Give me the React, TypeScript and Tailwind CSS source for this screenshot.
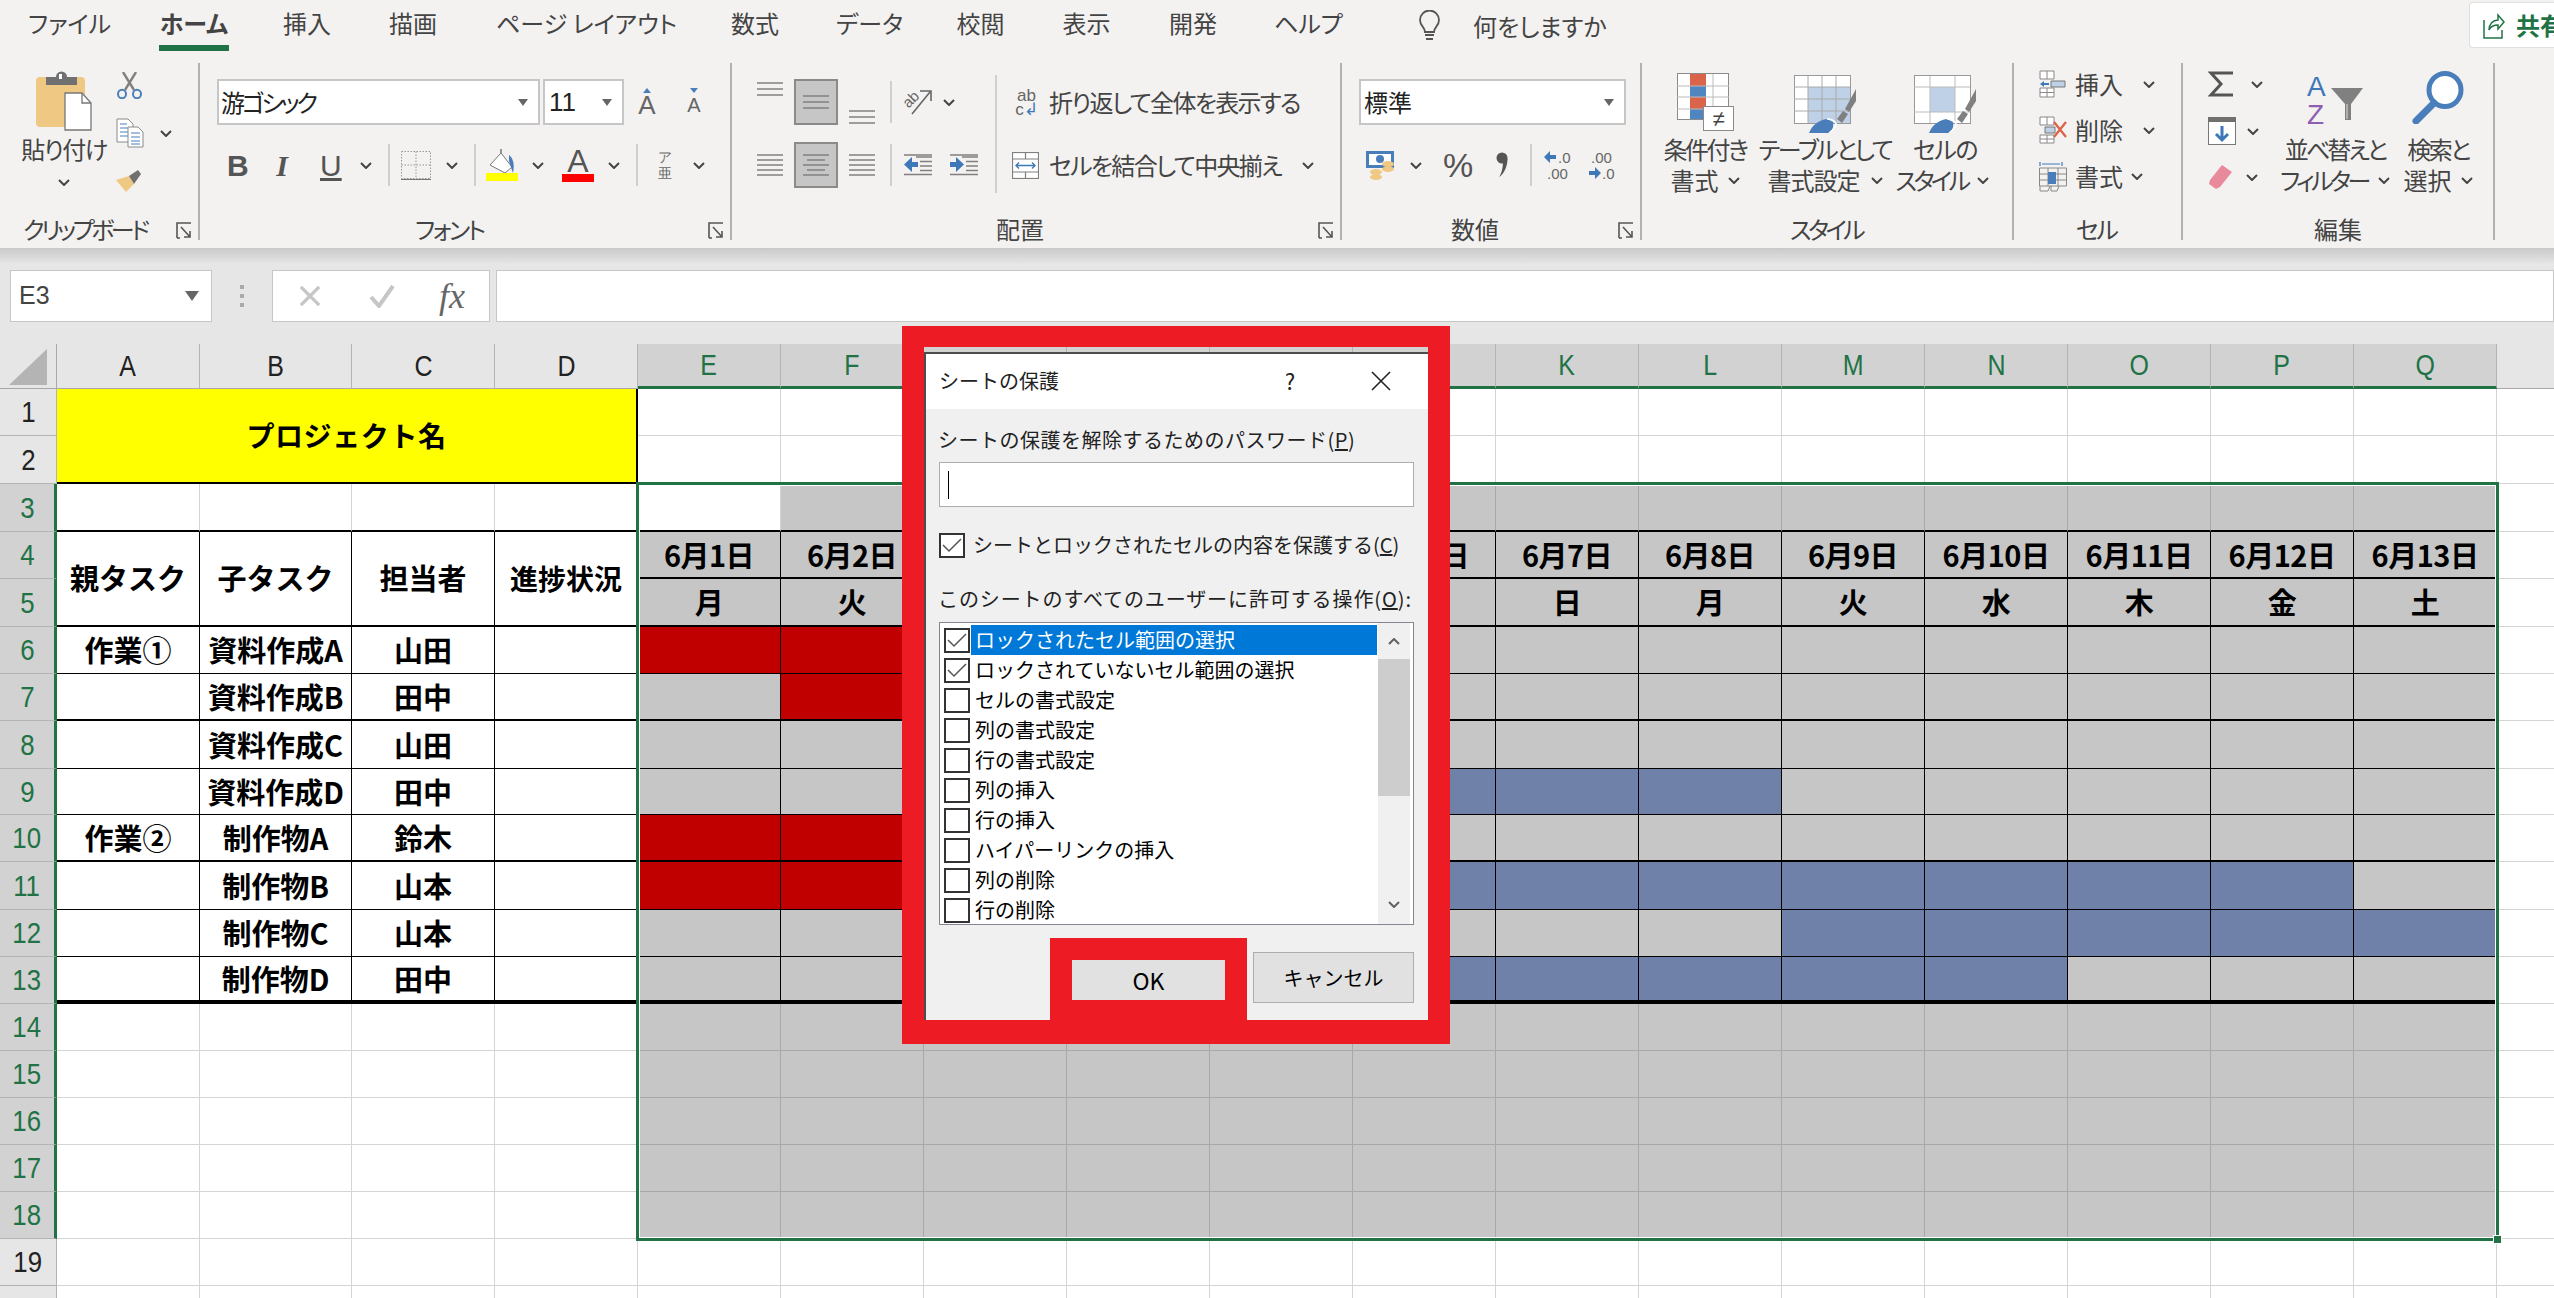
import React from 'react';

type C = { className?: string };

const Chev = ({ className = '' }: C) => (
  <svg viewBox="0 0 12 7" className={'w-[12px] h-[7px] shrink-0 ' + className} fill="none" stroke="#444" strokeWidth="2">
    <path d="M1 1l5 5 5-5" />
  </svg>
);
const Caret = () => (
  <svg viewBox="0 0 10 7" className="w-[10px] h-[7px] shrink-0" fill="#666"><path d="M0 0h10L5 7z" /></svg>
);
const Launcher = ({ className = '' }: C) => (
  <svg viewBox="0 0 16 17" className={'w-[16px] h-[17px] shrink-0 ' + className} fill="none" stroke="#555" strokeWidth="1.6">
    <path d="M1 16V1h14M5 5l9 10M14 9v6H8M1 16h3" />
  </svg>
);
const VSep = ({ className = '' }: C) => <div className={'w-[2px] bg-[#d0cfcd] shrink-0 ' + className} />;

const Lines = ({ ys, short = false }: { ys: number[]; short?: boolean }) => (
  <svg viewBox="0 0 26 24" className="w-[26px] h-[24px] shrink-0" stroke="#808080" strokeWidth="1.5">
    {ys.map((y, i) => (
      <path key={i} d={`M${short && i % 2 ? 4 : 0} ${y}H${short && i % 2 ? 22 : 26}`} />
    ))}
  </svg>
);
const SelBox = ({ ys, short = false, className = '' }: { ys: number[]; short?: boolean; className?: string }) => (
  <div className={'w-[44px] h-[46px] bg-[#c6c6c6] border-2 border-[#8a8a8a] flex items-center justify-center shrink-0 ' + className}>
    <Lines ys={ys} short={short} />
  </div>
);

const PasteIcon = () => (
  <svg viewBox="0 0 56 60" className="w-[56px] h-[60px]">
    <rect x="0" y="6" width="49" height="50" rx="4" fill="#efc884" />
    <path d="M10 14V6h10a5 5 0 0 1 11 0h10v8z" fill="#707070" />
    <rect x="23" y="3" width="3" height="5" fill="#fff" />
    <path d="M29 22h17l9 10v27H29z" fill="#fff" stroke="#777" strokeWidth="1.3" />
    <path d="M46 22v10h9" fill="none" stroke="#777" strokeWidth="1.3" />
  </svg>
);
const CutIcon = () => (
  <svg viewBox="0 0 27 27" className="w-[27px] h-[27px]" fill="none">
    <path d="M7 0l11 18M20 0L9 18" stroke="#808080" strokeWidth="2.4" />
    <ellipse cx="6" cy="22" rx="4" ry="4.2" stroke="#4a7ebb" strokeWidth="2" />
    <ellipse cx="21" cy="22" rx="4" ry="4.2" stroke="#4a7ebb" strokeWidth="2" />
  </svg>
);
const CopyIcon = () => (
  <svg viewBox="0 0 28 30" className="w-[28px] h-[30px] shrink-0" fill="#fff" stroke="#8a8a8a" strokeWidth="1">
    <path d="M1 1h11l5 5v18H1z" />
    <path d="M4 6h7M4 10h10M4 14h10M4 18h10" stroke="#4a7ebb" strokeWidth="1.2" />
    <path d="M12 9h10l5 5v15H12z" />
    <path d="M15 15h9M15 19h9M15 23h9M15 26h9" stroke="#4a7ebb" strokeWidth="1.2" />
  </svg>
);
const PainterIcon = () => (
  <svg viewBox="0 0 26 22" className="w-[26px] h-[22px]">
    <path d="M0 10l13-4 5 8-8 8z" fill="#efc884" />
    <path d="M13 6l9-6 3 4-7 10z" fill="#707070" />
  </svg>
);
const BordersIcon = () => (
  <svg viewBox="0 0 30 29" className="w-[30px] h-[29px] shrink-0" fill="none" stroke="#999" strokeDasharray="1.5 1.5">
    <path d="M0.5 0.5h29v27h-29zM0.5 14h29M15 0.5v27" />
    <path d="M0 28.5h30" stroke="#777" strokeWidth="1.2" strokeDasharray="none" />
  </svg>
);
const FillIcon = () => (
  <svg viewBox="0 0 32 32" className="w-[32px] h-[32px] shrink-0">
    <path d="M4 16L15 4l11 14-7 6z" fill="#fff" stroke="#777" strokeWidth="1" />
    <path d="M15 4V0" stroke="#777" strokeWidth="1.5" />
    <path d="M23 6c4 3 6 9 4 18-2-5-3-9-4-12z" fill="#4a7ebb" />
    <rect x="0" y="24" width="32" height="8" fill="#ffff00" />
  </svg>
);
const PhoneticIcon = () => (
  <div className="w-[15px] h-[30px] flex flex-col items-center justify-between shrink-0 text-[14px] leading-[14px] text-[#666]">
    <span>ア</span>
    <span>亜</span>
  </div>
);
const OrientIcon = () => (
  <svg viewBox="0 0 28 26" className="w-[28px] h-[26px] shrink-0 overflow-visible">
    <text x="0" y="15" fontSize="15" fill="#666" transform="rotate(-45 8 12)" fontFamily="Liberation Sans">ab</text>
    <path d="M8 25L26 3M16 2h11v10" fill="none" stroke="#666" strokeWidth="1.6" />
  </svg>
);
const IndentIcon = ({ flip = false }: { flip?: boolean }) => (
  <svg viewBox="0 0 28 22" className="w-[28px] h-[22px] shrink-0">
    <path d="M12 3h16M16 7.5h12M16 12h12M16 16.5h12M0 20.5h28M0 1h28" stroke="#808080" strokeWidth="1.3" />
    {flip ? <path d="M0 8h6V3l8 7.5L6 18v-5H0z" fill="#3f78b8" /> : <path d="M14 8H8V3L0 10.5 8 18v-5h6z" fill="#3f78b8" />}
  </svg>
);
const WrapIcon = () => (
  <div className="w-[21px] h-[26px] shrink-0 flex flex-col text-[17px] leading-[14px] text-[#666] font-['Liberation_Sans',sans-serif] items-center">
    <span>ab</span>
    <span>c<span className="text-[#3f78b8]">↲</span></span>
  </div>
);
const MergeIcon = () => (
  <svg viewBox="0 0 27 27" className="w-[27px] h-[27px] shrink-0" fill="none" stroke="#808080" strokeWidth="1.2">
    <rect x="0.5" y="0.5" width="26" height="26" fill="#fff" />
    <path d="M0 7h27M0 20h27M13.5 0v7M13.5 20v7" />
    <path d="M4 13.5h19M7 10.5l-3 3 3 3M20 10.5l3 3-3 3" stroke="#3f78b8" strokeWidth="1.4" />
  </svg>
);
const CurrencyIcon = () => (
  <svg viewBox="0 0 29 29" className="w-[29px] h-[29px] shrink-0">
    <rect x="0" y="0" width="28" height="17" fill="#4a7ebb" />
    <rect x="3" y="3" width="22" height="11" fill="#fff" />
    <circle cx="14" cy="8" r="4" fill="#4a7ebb" />
    <ellipse cx="22" cy="13" rx="6" ry="3" fill="#efc884" />
    <ellipse cx="22" cy="18" rx="6" ry="3" fill="#efc884" />
    <ellipse cx="10" cy="21" rx="6" ry="3" fill="#efc884" />
    <ellipse cx="10" cy="26" rx="6" ry="3" fill="#efc884" />
  </svg>
);
const CommaIcon = () => (
  <svg viewBox="0 0 12 26" className="w-[12px] h-[26px] shrink-0" fill="#555">
    <circle cx="6" cy="6" r="5.5" />
    <path d="M7 8c4 0 5-1 4.500-3C12 14 8 22 3 25c3-4 4-10 4-17z" />
  </svg>
);
const DecIcon = ({ inc = false }: { inc?: boolean }) => (
  <svg viewBox="0 0 28 30" className="w-[28px] h-[30px] shrink-0" fontFamily="Liberation Sans" fontSize="15" fill="#666">
    {inc ? (
      <>
        <path d="M0 7l6-6v4h6v4H6v4z" fill="#3f78b8" />
        <text x="14" y="13">.0</text>
        <text x="3" y="29">.00</text>
      </>
    ) : (
      <>
        <text x="3" y="13">.00</text>
        <path d="M13 23l-6-6v4H1v4h6v4z" fill="#3f78b8" />
        <text x="14" y="29">.0</text>
      </>
    )}
  </svg>
);
const CondIcon = () => (
  <svg viewBox="0 0 57 58" className="w-[57px] h-[58px]">
    <rect x="0.500" y="0.500" width="51" height="46" fill="#fff" stroke="#8a8a8a" />
    <rect x="13" y="1" width="16" height="12" fill="#d9644a" />
    <rect x="13" y="13" width="16" height="11" fill="#4f86c0" />
    <rect x="13" y="24" width="16" height="12" fill="#d9644a" />
    <rect x="13" y="36" width="16" height="10" fill="#4f86c0" />
    <path d="M36 1v45M0 13h52M0 24h52M0 36h52" stroke="#bbb" />
    <rect x="26.500" y="33.500" width="30" height="24" fill="#fff" stroke="#8a8a8a" />
    <text x="41.500" y="53" fontSize="22" textAnchor="middle" fill="#444" fontFamily="Liberation Sans">≠</text>
  </svg>
);
const BrushIcon = ({ v = 0 }: { v?: number }) => (
  <svg viewBox="0 0 62 60" className="w-[62px] h-[60px]">
    <rect x="0.500" y="2.500" width="56" height={48} fill="#fff" stroke="#999" />
    {v ? (
      <>
        <rect x="16" y="14" width="25" height="25" fill="#bed1e6" />
        <path d="M16 3v47M41 3v47M0 14h56M0 39h56" stroke="#bbb" />
      </>
    ) : (
      <>
        <rect x="14" y="14" width="42" height="36" fill="#bed1e6" />
        <path d="M14 3v47M28 3v47M42 3v47M0 14h56M0 26h56M0 38h56" stroke="#aaa" />
      </>
    )}
    <path d="M62 16l-11 20 4 3 7-11z" fill="#808080" />
    <path d="M49 38l-6 8 5 4 6-9z" fill="#808080" />
    <path d="M15 60c3-8 10-13 18-14l6 3c1 5-1 9-4 11z" fill="#4a7ebb" />
    <path d="M33 46c4 0 9 2 9 5s-3 6-7 9" fill="none" stroke="#fff" strokeWidth="1.500" />
  </svg>
);
const MiniGrid = ({ children }: { children?: React.ReactNode }) => (
  <svg viewBox="0 0 28 28" className="w-[28px] h-[28px] shrink-0" fill="#fff" stroke="#888" strokeWidth="1">
    {children}
  </svg>
);
const InsertIcon = () => (
  <MiniGrid>
    <path d="M1 1h14v8H1zM8 1v8M1 18h14v9H1zM8 18v9M1 22.500h14" />
    <path d="M12 11h14v6H12z" fill="#bed1e6" stroke="#777" />
    <path d="M1 14l4-3v2h5v2H5v2z" fill="#3f78b8" stroke="none" />
  </MiniGrid>
);
const DeleteIcon = () => (
  <MiniGrid>
    <path d="M1 1h14v8H1zM8 1v8M1 19h14v8H1zM8 19v8M1 23h14" />
    <path d="M6 11h10v6H6z" fill="#bed1e6" stroke="#777" />
    <path d="M15 6l12 15M27 6L15 21" stroke="#d9644a" strokeWidth="2.300" fill="none" />
  </MiniGrid>
);
const FormatIcon = () => (
  <svg viewBox="0 0 28 32" className="w-[28px] h-[32px] shrink-0" fill="none" stroke="#888">
    <path d="M1 2v4M23 2v4M3 4h18" stroke="#3f78b8" strokeWidth="1.200" />
    <path d="M0.500 8h27v18h-27zM9 8v18M19 8v18M0 14h28M0 20h28M1 26v5h8l2-5M12 26v5h6l2-5" />
    <rect x="9" y="12" width="8" height="12" fill="#4a7ebb" stroke="none" />
  </svg>
);
const SigmaIcon = () => (
  <svg viewBox="0 0 26 26" className="w-[26px] h-[26px] shrink-0" fill="none" stroke="#555" strokeWidth="3">
    <path d="M25 2H3l10 11L3 24h22" />
  </svg>
);
const FillDownIcon = () => (
  <svg viewBox="0 0 28 28" className="w-[28px] h-[28px] shrink-0">
    <rect x="0.500" y="0.500" width="27" height="27" fill="#fff" stroke="#777" />
    <rect x="0" y="0" width="28" height="5" fill="#707070" />
    <path d="M14 9v14M8 17l6 6 6-6" fill="none" stroke="#3f78b8" strokeWidth="3" />
  </svg>
);
const EraserIcon = () => (
  <svg viewBox="0 0 25 24" className="w-[25px] h-[24px] shrink-0" fill="#e88a9c">
    <path d="M14 0l10 7-12 15-4 2-7-5 1-4z" />
  </svg>
);
const SortIcon = () => (
  <svg viewBox="0 0 56 50" className="w-[56px] h-[50px]">
    <text x="0" y="22" fontSize="28" fontFamily="Liberation Sans" fill="#3f78b8">A</text>
    <text x="0" y="50" fontSize="28" fontFamily="Liberation Sans" fill="#8e5fb0">Z</text>
    <path d="M24 14h32L44 30v16h-6V30z" fill="#808080" />
    <path d="M40 30v15" stroke="#ddd" strokeWidth="1" />
  </svg>
);
const SearchIcon = () => (
  <svg viewBox="0 0 52 53" className="w-[52px] h-[53px]" fill="none" stroke="#4a7ebb">
    <ellipse cx="33" cy="19" rx="16" ry="16.500" strokeWidth="5" fill="#fff" />
    <path d="M22 32L4 50" strokeWidth="7" strokeLinecap="round" />
  </svg>
);

type Tab = [string, string];
const tabs: Tab[] = [
  ['ファイル', 'ml-[28px] w-[75px]'],
  ['ホーム', 'ml-[56px] w-[70px]'],
  ['挿入', 'ml-[52px] w-[52px]'],
  ['描画', 'ml-[54px] w-[52px]'],
  ['ページ レイアウト', 'ml-[57px] w-[176px]'],
  ['数式', 'ml-[56px] w-[54px]'],
  ['データ', 'ml-[54px] w-[64px]'],
  ['校閲', 'ml-[54px] w-[53px]'],
  ['表示', 'ml-[53px] w-[53px]'],
  ['開発', 'ml-[54px] w-[52px]'],
  ['ヘルプ', 'ml-[55px] w-[66px]'],
];

const GroupLabel = ({ children, className = '' }: { children: React.ReactNode; className?: string }) => (
  <div className={'h-[18px] leading-[14px] whitespace-nowrap ' + className}>{children}</div>
);

const Ribbon = () => (
  <div className="h-[248px] bg-[#f3f2f1] text-[#444] text-[24px] [font-feature-settings:'palt'] flex flex-col shrink-0 relative z-10">
    <div className="h-[63px] flex relative">
      {tabs.map(([t, c]) => (
        <div key={t} className={'h-[51px] pt-[3px] text-center whitespace-nowrap leading-[40px] shrink-0 ' + c + (t === 'ホーム' ? ' font-bold border-b-[6px] border-[#217346]' : '')}>
          {t}
        </div>
      ))}
      <div className="ml-[78px] h-[51px] flex items-center shrink-0">
        <svg viewBox="0 0 23 32" className="w-[23px] h-[32px]" fill="none" stroke="#555" strokeWidth="1.800">
          <path d="M7 22c0-5-5-6-5-12a9.500 9.500 0 0 1 19 0c0 6-5 7-5 12zM7 25h9M8 29h7" />
        </svg>
        <span className="ml-[32px] whitespace-nowrap">何をしますか</span>
      </div>
      <div className="ml-auto mt-[2px] w-[85px] h-[46px] bg-white border border-[#e1dfdd] border-r-0 rounded-l-[4px] flex items-center overflow-hidden pl-[13px]">
        <svg viewBox="0 0 22 30" className="w-[22px] h-[30px] shrink-0" fill="none" stroke="#217346" strokeWidth="1.500">
          <path d="M1 10v18h18v-8M6 20c0-6 4-10 9-10V5l6 7-6 7v-4c-4 0-7 1-9 5z" />
        </svg>
        <span className="ml-[11px] font-bold text-[#217346] whitespace-nowrap">共有</span>
      </div>
    </div>
    <div className="h-[177px] flex">
      {/* clipboard */}
      <section className="w-[200px] border-r-2 border-[#b3b0ad] flex flex-col shrink-0">
        <div className="h-[159px] flex">
          <div className="ml-[12px] w-[104px] pt-[8px] flex flex-col items-center">
            <PasteIcon />
            <div className="mt-[6px] h-[24px] leading-[24px] whitespace-nowrap tracking-[-1.5px]">貼り付け</div>
            <Chev className="mt-[18px]" />
          </div>
          <div className="pt-[9px] flex flex-col">
            <CutIcon />
            <div className="mt-[19px] flex items-center">
              <CopyIcon />
              <Chev className="ml-[16px]" />
            </div>
            <div className="mt-[22px]"><PainterIcon /></div>
          </div>
        </div>
        <div className="flex items-start h-[18px]">
          <GroupLabel className="ml-[23px] tracking-[-3.5px]">クリップボード</GroupLabel>
          <Launcher className="ml-auto mr-[6px]" />
        </div>
      </section>
      {/* font */}
      <section className="w-[532px] border-r-2 border-[#b3b0ad] flex flex-col shrink-0">
        <div className="h-[159px] pt-[16px] flex flex-col">
          <div className="flex items-center h-[46px]">
            <div className="ml-[17px] w-[323px] h-[46px] bg-white border-2 border-[#c6c6c6] flex items-center justify-between pl-[2px] pr-[10px] text-[#222]">
              <span className="tracking-[-3px]">游ゴシック</span>
              <Caret />
            </div>
            <div className="ml-[3px] w-[81px] h-[46px] bg-white border-2 border-[#c6c6c6] flex items-center justify-between pl-[4px] pr-[10px] text-[#222] text-[26px] font-['Liberation_Sans',sans-serif]">
              <span>11</span>
              <Caret />
            </div>
            <div className="ml-[11px] w-[24px] flex flex-col items-center font-['Liberation_Sans',sans-serif] text-[26px] leading-[24px] text-[#666]">
              <svg viewBox="0 0 8 5" className="w-[8px] h-[5px]" fill="#4a7ebb"><path d="M4 0l4 5H0z" /></svg>
              <span>A</span>
            </div>
            <div className="ml-[25px] w-[20px] flex flex-col items-center font-['Liberation_Sans',sans-serif] text-[20px] leading-[24px] text-[#666]">
              <svg viewBox="0 0 8 5" className="w-[8px] h-[5px]" fill="#4a7ebb"><path d="M4 5l4-5H0z" /></svg>
              <span>A</span>
            </div>
          </div>
          <div className="mt-[17px] flex items-center h-[46px] text-[#555] font-['Liberation_Sans',sans-serif]">
            <span className="ml-[27px] w-[20px] text-center text-[30px] font-bold">B</span>
            <span className="ml-[27px] w-[16px] text-center text-[30px] font-bold italic [font-family:'Liberation_Serif',serif]">I</span>
            <span className="ml-[30px] w-[18px] text-center text-[30px] underline underline-offset-2">U</span>
            <Chev className="ml-[22px]" />
            <VSep className="ml-[16px] h-[42px]" />
            <div className="ml-[11px]"><BordersIcon /></div>
            <Chev className="ml-[15px]" />
            <VSep className="ml-[16px] h-[42px]" />
            <div className="ml-[10px]"><FillIcon /></div>
            <Chev className="ml-[14px]" />
            <div className="ml-[18px] w-[32px] flex flex-col items-center">
              <span className="text-[32px] leading-[26px] text-[#555]">A</span>
              <div className="w-[32px] h-[8px] bg-[#ff0000]" />
            </div>
            <Chev className="ml-[14px]" />
            <VSep className="ml-[16px] h-[42px]" />
            <div className="ml-[19px]"><PhoneticIcon /></div>
            <Chev className="ml-[21px]" />
          </div>
        </div>
        <div className="flex items-start h-[18px]">
          <GroupLabel className="ml-[215px] tracking-[-2.5px]">フォント</GroupLabel>
          <Launcher className="ml-auto mr-[6px]" />
        </div>
      </section>
      {/* alignment */}
      <section className="w-[610px] border-r-2 border-[#b3b0ad] flex flex-col shrink-0">
        <div className="h-[159px] pt-[16px] flex">
          <div className="w-[263px] flex flex-col shrink-0">
            <div className="flex items-center h-[46px]">
              <div className="ml-[25px] mb-[20px]"><Lines ys={[3, 9, 15]} /></div>
              <SelBox className="ml-[11px]" ys={[6, 12, 18]} />
              <div className="ml-[11px] mt-[24px]"><Lines ys={[9, 15, 21]} /></div>
              <VSep className="ml-[15px] h-[42px]" />
              <div className="ml-[12px]"><OrientIcon /></div>
              <Chev className="ml-[11px]" />
            </div>
            <div className="mt-[17px] flex items-center h-[46px]">
              <div className="ml-[25px]"><Lines ys={[2, 7, 12, 17, 22]} /></div>
              <SelBox className="ml-[11px]" ys={[2, 7, 12, 17, 22]} short />
              <div className="ml-[11px]"><Lines ys={[2, 7, 12, 17, 22]} /></div>
              <VSep className="ml-[15px] h-[42px]" />
              <div className="ml-[12px]"><IndentIcon /></div>
              <div className="ml-[18px]"><IndentIcon flip /></div>
            </div>
          </div>
          <VSep className="mt-[-4px] h-[118px]" />
          <div className="flex flex-col">
            <div className="flex items-center h-[46px]">
              <div className="ml-[19px]"><WrapIcon /></div>
              <span className="ml-[12px] whitespace-nowrap tracking-[-1.7px]">折り返して全体を表示する</span>
            </div>
            <div className="mt-[17px] flex items-center h-[46px]">
              <div className="ml-[15px]"><MergeIcon /></div>
              <span className="ml-[10px] w-[232px] whitespace-nowrap tracking-[-1.7px]">セルを結合して中央揃え</span>
              <Chev className="ml-[21px]" />
            </div>
          </div>
        </div>
        <div className="flex items-start h-[18px]">
          <GroupLabel className="ml-[264px]">配置</GroupLabel>
          <Launcher className="ml-auto mr-[6px]" />
        </div>
      </section>
      {/* number */}
      <section className="w-[300px] border-r-2 border-[#b3b0ad] flex flex-col shrink-0">
        <div className="h-[159px] pt-[16px] flex flex-col">
          <div className="ml-[17px] w-[267px] h-[46px] bg-white border-2 border-[#c6c6c6] flex items-center justify-between pl-[3px] pr-[10px] text-[#222]">
            <span>標準</span>
            <Caret />
          </div>
          <div className="mt-[17px] flex items-center h-[46px] text-[#555]">
            <div className="ml-[24px]"><CurrencyIcon /></div>
            <Chev className="ml-[15px]" />
            <span className="ml-[21px] w-[26px] text-center text-[34px] font-['Liberation_Sans',sans-serif]">%</span>
            <div className="ml-[27px]"><CommaIcon /></div>
            <VSep className="ml-[22px] h-[42px]" />
            <div className="ml-[12px]"><DecIcon inc /></div>
            <div className="ml-[16px]"><DecIcon /></div>
          </div>
        </div>
        <div className="flex items-start h-[18px]">
          <GroupLabel className="ml-[109px]">数値</GroupLabel>
          <Launcher className="ml-auto mr-[6px]" />
        </div>
      </section>
      {/* style */}
      <section className="w-[372px] border-r-2 border-[#b3b0ad] flex flex-col shrink-0">
        <div className="h-[159px] flex pt-[10px]">
          <div className="ml-[13px] w-[100px] flex flex-col items-center shrink-0">
            <CondIcon />
            <div className="mt-[6px] h-[24px] leading-[24px] whitespace-nowrap tracking-[-2.5px]">条件付き</div>
            <div className="mt-[7px] h-[24px] leading-[24px] flex items-center whitespace-nowrap">書式<Chev className="ml-[9px]" /></div>
          </div>
          <div className="w-[140px] flex flex-col items-center shrink-0">
            <BrushIcon />
            <div className="mt-[4px] h-[24px] leading-[24px] whitespace-nowrap tracking-[-2.5px]">テーブルとして</div>
            <div className="mt-[7px] h-[24px] leading-[24px] flex items-center whitespace-nowrap tracking-[-1px]">書式設定<Chev className="ml-[11px]" /></div>
          </div>
          <div className="w-[100px] flex flex-col items-center shrink-0">
            <BrushIcon v={1} />
            <div className="mt-[4px] h-[24px] leading-[24px] whitespace-nowrap tracking-[-1.5px]">セルの</div>
            <div className="mt-[7px] h-[24px] leading-[24px] flex items-center whitespace-nowrap tracking-[-3.5px] mr-[6px]">スタイル<Chev className="ml-[9px]" /></div>
          </div>
        </div>
        <GroupLabel className="ml-[148px] tracking-[-3.5px]">スタイル</GroupLabel>
      </section>
      {/* cells */}
      <section className="w-[169px] border-r-2 border-[#b3b0ad] flex flex-col shrink-0">
        <div className="h-[159px] flex flex-col pl-[25px]">
          <div className="h-[42px] flex items-center"><InsertIcon /><span className="ml-[8px] w-[48px] whitespace-nowrap">挿入</span><Chev className="ml-[20px]" /></div>
          <div className="mt-[4px] h-[42px] flex items-center"><DeleteIcon /><span className="ml-[8px] w-[48px] whitespace-nowrap">削除</span><Chev className="ml-[20px]" /></div>
          <div className="mt-[4px] h-[42px] flex items-center"><FormatIcon /><span className="ml-[8px] w-[48px] whitespace-nowrap">書式</span><Chev className="ml-[8px]" /></div>
        </div>
        <GroupLabel className="ml-[62px] tracking-[-2.5px]">セル</GroupLabel>
      </section>
      {/* edit */}
      <section className="w-[312px] border-r-2 border-[#b3b0ad] flex flex-col shrink-0">
        <div className="h-[159px] flex">
          <div className="ml-[25px] w-[64px] flex flex-col shrink-0">
            <div className="h-[42px] flex items-center"><SigmaIcon /><Chev className="ml-[17px]" /></div>
            <div className="mt-[5px] h-[42px] flex items-center"><FillDownIcon /><Chev className="ml-[11px]" /></div>
            <div className="mt-[4px] h-[42px] flex items-center"><EraserIcon /><Chev className="ml-[13px]" /></div>
          </div>
          <div className="w-[126px] pt-[11px] flex flex-col items-center shrink-0">
            <SortIcon />
            <div className="mt-[13px] h-[24px] leading-[24px] whitespace-nowrap tracking-[-3px]">並べ替えと</div>
            <div className="mt-[7px] h-[24px] leading-[24px] flex items-center whitespace-nowrap tracking-[-3.5px]">フィルター<Chev className="ml-[10px]" /></div>
          </div>
          <div className="w-[80px] pt-[8px] flex flex-col items-center shrink-0">
            <SearchIcon />
            <div className="mt-[13px] h-[24px] leading-[24px] whitespace-nowrap tracking-[-2.5px]">検索と</div>
            <div className="mt-[7px] h-[24px] leading-[24px] flex items-center whitespace-nowrap">選択<Chev className="ml-[9px]" /></div>
          </div>
        </div>
        <GroupLabel className="ml-[131px]">編集</GroupLabel>
      </section>
    </div>
  </div>
);

const FormulaBar = () => (
  <div className="h-[96px] bg-[#e6e6e6] shrink-0 flex flex-col">
    <div className="h-[16px] bg-gradient-to-b from-[#c9c9c9] to-[#e6e6e6]" />
    <div className="mt-[6px] h-[52px] flex">
      <div className="ml-[10px] w-[202px] h-[52px] bg-white border border-[#c6c6c6] flex items-center justify-between pl-[8px] pr-[12px] text-[25px] text-[#444] font-['Liberation_Sans',sans-serif]">
        <span>E3</span>
        <svg viewBox="0 0 14 10" className="w-[14px] h-[10px]" fill="#666"><path d="M0 0h14L7 10z" /></svg>
      </div>
      <div className="w-[60px] flex flex-col items-center justify-center gap-[5px]">
        <div className="w-[4px] h-[4px] bg-[#aaa]" />
        <div className="w-[4px] h-[4px] bg-[#aaa]" />
        <div className="w-[4px] h-[4px] bg-[#aaa]" />
      </div>
      <div className="w-[218px] h-[52px] bg-white border border-[#c6c6c6] flex items-center">
        <svg viewBox="0 0 24 24" className="ml-[25px] w-[24px] h-[22px]" fill="none" stroke="#c6c6c6" strokeWidth="3.500"><path d="M2 2l20 20M22 2L2 22" /></svg>
        <svg viewBox="0 0 26 24" className="ml-[47px] w-[26px] h-[24px]" fill="none" stroke="#c6c6c6" strokeWidth="4"><path d="M2 13l8 9L24 2" /></svg>
        <span className="ml-[44px] text-[36px] italic text-[#666] font-['Liberation_Serif',serif]">fx</span>
      </div>
      <div className="ml-[6px] flex-1 h-[52px] bg-white border border-[#c6c6c6]" />
    </div>
  </div>
);

const COLS = ['A', 'B', 'C', 'D', 'E', 'F', 'G', 'H', 'I', 'J', 'K', 'L', 'M', 'N', 'O', 'P', 'Q'];
const ROWS = Array.from({ length: 19 }, (_, i) => i + 1);
const GANTT = COLS.slice(4);
const DAYS = ['月', '火', '水', '木', '金', '土', '日', '月', '火', '水', '木', '金', '土'];
const RED: Record<number, string[]> = { 6: ['E', 'F', 'G'], 7: ['F', 'G'], 10: ['E', 'F', 'G'], 11: ['E', 'F', 'G'] };
const BLUE: Record<number, string[]> = {
  9: ['H', 'I', 'J', 'K', 'L'],
  11: ['H', 'I', 'J', 'K', 'L', 'M', 'N', 'O', 'P'],
  12: ['M', 'N', 'O', 'P', 'Q'],
  13: ['H', 'I', 'J', 'K', 'L', 'M', 'N'],
};
const TASKS: Record<number, [string, string, string]> = {
  6: ['作業①', '資料作成A', '山田'],
  7: ['', '資料作成B', '田中'],
  8: ['', '資料作成C', '山田'],
  9: ['', '資料作成D', '田中'],
  10: ['作業②', '制作物A', '鈴木'],
  11: ['', '制作物B', '山本'],
  12: ['', '制作物C', '山本'],
  13: ['', '制作物D', '田中'],
};
const bottomOf = (r: number) => {
  if (r === 13) return 'border-b-[4px] border-b-black';
  if (r === 3 || r === 4 || r === 5 || r === 7 || r === 10) return 'border-b-2 border-b-black';
  return 'border-b border-b-black';
};

const Label = ({ children, big = false, green = false, className = '' }: { children: React.ReactNode; big?: boolean; green?: boolean; className?: string }) => (
  <span className={'inline-block font-["Liberation_Sans",sans-serif] scale-x-[.86] leading-none ' + (big ? 'text-[30px] ' : 'text-[29px] ') + (green ? 'text-[#217346] ' : 'text-[#222] ') + className}>
    {children}
  </span>
);

const Sheet = () => {
  const cells: React.ReactNode[] = [];
  cells.push(
    <div key="corner" className="bg-[#e6e6e6] border-b border-r border-[#a8a8a8] flex items-end justify-center pb-[3px]">
      <svg viewBox="0 0 38 36" className="w-[38px] h-[36px]" fill="#b4b4b4"><path d="M38 0v36H0z" /></svg>
    </div>
  );
  COLS.forEach((c) => {
    const sel = GANTT.includes(c);
    cells.push(
      <div key={'h' + c} className={'flex items-center justify-center border-r border-r-[#b4b4b4] ' + (sel ? 'bg-[#d2d2d2] border-b-[3px] border-b-[#217346]' : 'bg-[#e6e6e6] border-b border-b-[#a8a8a8]')}>
        <Label green={sel}>{c}</Label>
      </div>
    );
  });
  cells.push(<div key="hEnd" className="bg-[#e6e6e6] border-b border-b-[#a8a8a8]" />);

  ROWS.forEach((r) => {
    const sel = r >= 3 && r <= 18;
    cells.push(
      <div key={'r' + r} className={'flex items-center justify-center border-b ' + (sel ? 'bg-[#d2d2d2] border-b-[#b4b4b4] border-r-[3px] border-r-[#217346]' : 'bg-[#e6e6e6] border-b-[#b4b4b4] border-r border-r-[#b4b4b4]')}>
        <Label big green={sel}>{r}</Label>
      </div>
    );

    if (r === 1) {
      cells.push(
        <div key="title" className="col-span-4 row-span-2 pb-[2px] bg-[#ffff00] border-b-2 border-b-black border-r-2 border-r-black flex items-center justify-center text-[28px] font-bold text-black tracking-[0.6px]">
          プロジェクト名
        </div>
      );
    } else if (r === 4) {
      ['親タスク', '子タスク', '担当者', '進捗状況'].forEach((t, i) =>
        cells.push(
          <div key={t} className={'row-span-2 pb-[2px] bg-white border-b-2 border-b-black border-r border-r-black flex items-center justify-center font-bold text-black whitespace-nowrap ' + (i === 3 ? 'text-[28px]' : 'text-[29px]')}>
            {t}
          </div>
        )
      );
    } else if (r === 3 || (r >= 14 && r <= 19)) {
      [0, 1, 2, 3].forEach((i) =>
        cells.push(<div key={r + 'w' + i} className={'bg-white border-r border-r-[#d4d4d4] ' + (r === 3 ? 'border-b-2 border-b-black' : 'border-b border-b-[#d4d4d4]')} />)
      );
    } else if (r >= 6 && r <= 13) {
      const t = TASKS[r];
      [t[0], t[1], t[2], ''].forEach((v, i) =>
        cells.push(
          <div key={r + 't' + i} className={'bg-white border-r border-r-black flex items-center justify-center text-[29px] font-bold text-black whitespace-nowrap overflow-hidden ' + bottomOf(r)}>
            {v}
          </div>
        )
      );
    }

    GANTT.forEach((c, i) => {
      const key = c + r;
      if (r <= 2 || r === 19) {
        cells.push(<div key={key} className="bg-white border-r border-r-[#d4d4d4] border-b border-b-[#d4d4d4]" />);
      } else if (r === 3) {
        cells.push(<div key={key} className={'border-r border-b-2 border-b-black ' + (c === 'E' ? 'bg-white border-r-[#d4d4d4]' : 'bg-[#c6c6c6] border-r-[#a8a8a8]')} />);
      } else if (r === 4 || r === 5) {
        cells.push(
          <div key={key} className="bg-[#c6c6c6] border-r border-r-black border-b-2 border-b-black flex items-center justify-center text-[29px] font-bold text-black whitespace-nowrap overflow-hidden tracking-[-0.5px]">
            {r === 4 ? `6月${i + 1}日` : DAYS[i]}
          </div>
        );
      } else if (r <= 13) {
        const bg = RED[r]?.includes(c) ? 'bg-[#c00000]' : BLUE[r]?.includes(c) ? 'bg-[#6f81a9]' : 'bg-[#c6c6c6]';
        cells.push(<div key={key} className={'border-r border-r-black ' + bg + ' ' + bottomOf(r)} />);
      } else {
        cells.push(<div key={key} className="bg-[#c6c6c6] border-r border-r-[#a8a8a8] border-b border-b-[#a8a8a8]" />);
      }
    });
    cells.push(<div key={'e' + r} className="bg-white border-b border-b-[#d4d4d4]" />);
  });

  cells.push(<div key="r20" className="bg-[#e6e6e6] border-r border-r-[#b4b4b4]" />);
  for (let i = 0; i < 17; i++) cells.push(<div key={'s' + i} className="bg-white border-r border-r-[#d4d4d4]" />);
  cells.push(<div key="sEnd" className="bg-white" />);

  return (
    <div className="h-[954px] grid grid-cols-[57px_143px_152px_143px_143px_repeat(13,143px)_1fr] grid-rows-[45px_47px_48px_48px_47px_48px_47px_47px_48px_46px_47px_48px_47px_47px_47px_47px_47px_47px_47px_47px_12px] font-['Noto_Sans_CJK_JP','Liberation_Sans',sans-serif] relative">
      {cells}
      <div className="absolute col-start-6 col-end-19 row-start-4 row-end-20 inset-[-2px] border-[3px] border-[#217346] shadow-[inset_0_0_0_1px_#ffffff] pointer-events-none">
        <div className="absolute right-[-6px] bottom-[-6px] w-[9px] h-[9px] bg-[#217346] border border-white" />
      </div>
    </div>
  );
};

const Check = () => (
  <svg viewBox="0 0 20 16" className="w-[20px] h-[16px]" fill="none" stroke="#555" strokeWidth="1.500"><path d="M1 8l6 6L19 2" /></svg>
);
const Box = ({ checked = false, className = '' }: { checked?: boolean; className?: string }) => (
  <div className={'w-[26px] h-[25px] border-2 border-[#333] bg-white flex items-center justify-center shrink-0 ' + className}>{checked && <Check />}</div>
);

const ITEMS = [
  'ロックされたセル範囲の選択',
  'ロックされていないセル範囲の選択',
  'セルの書式設定',
  '列の書式設定',
  '行の書式設定',
  '列の挿入',
  '行の挿入',
  'ハイパーリンクの挿入',
  '列の削除',
  '行の削除',
];

const Dialog = () => (
  <div className="absolute left-[902px] top-[326px] w-[548px] h-[718px] border-x-[22px] border-t-[21px] border-b-[24px] border-[#ed1c24] pt-[5px] z-20 font-['Noto_Sans_CJK_JP','Liberation_Sans',sans-serif] text-[20px] text-[#222]">
    <div className="h-[668px] flex flex-col border-t-2 border-l-2 border-[#4d4d4d] bg-[#f0f0f0]">
      <div className="h-[55px] pb-[2px] bg-white flex items-center shrink-0">
        <span className="ml-[13px]">シートの保護</span>
        <span className="ml-[221px] w-[20px] text-center text-[22px]">?</span>
        <svg viewBox="0 0 20 20" className="ml-[71px] w-[20px] h-[20px]" fill="none" stroke="#222" strokeWidth="1.600"><path d="M1 1l18 18M19 1L1 19" /></svg>
      </div>
      <div className="flex-1 pl-[12px] pr-[14px] pt-[16px] flex flex-col">
        <div className="h-[30px] leading-[30px] whitespace-nowrap tracking-[0.5px]">シートの保護を解除するためのパスワード(<u>P</u>)</div>
        <div className="ml-[1px] mt-[7px] h-[45px] bg-white border border-[#adadad] flex items-center pl-[8px] shrink-0">
          <div className="w-px h-[28px] bg-black" />
        </div>
        <div className="ml-[1px] mt-[25px] h-[26px] flex items-center whitespace-nowrap">
          <Box checked />
          <span className="ml-[8px]">シートとロックされたセルの内容を保護する(<u>C</u>)</span>
        </div>
        <div className="mt-[26px] h-[30px] leading-[30px] whitespace-nowrap tracking-[0.9px]">このシートのすべてのユーザーに許可する操作(<u>O</u>):</div>
        <div className="ml-[1px] mt-[8px] h-[303px] bg-white border border-[#828790] flex overflow-hidden shrink-0">
          <div className="w-[437px] pt-[2px] flex flex-col shrink-0">
            {ITEMS.map((t, i) => (
              <div key={t} className="h-[30px] flex items-center pl-[4px] shrink-0">
                <Box checked={i < 2} />
                <span className={'ml-[1px] h-[30px] leading-[30px] pl-[4px] flex-1 whitespace-nowrap ' + (i === 0 ? 'bg-[#0078d7] text-white' : 'text-black')}>{t}</span>
              </div>
            ))}
          </div>
          <div className="ml-[1px] w-[32px] bg-[#f0f0f0] flex flex-col items-center shrink-0">
            <div className="h-[36px] flex items-center justify-center">
              <svg viewBox="0 0 12 7" className="w-[12px] h-[7px]" fill="none" stroke="#606060" strokeWidth="2"><path d="M1 6l5-5 5 5" /></svg>
            </div>
            <div className="w-[32px] h-[137px] bg-[#cdcdcd]" />
            <div className="mt-auto h-[40px] flex items-center justify-center">
              <svg viewBox="0 0 12 7" className="w-[12px] h-[7px]" fill="none" stroke="#606060" strokeWidth="2"><path d="M1 1l5 5 5-5" /></svg>
            </div>
          </div>
        </div>
        <div className="mt-[27px] flex justify-end items-start">
          <div className="mt-[-14px] mr-[6px] w-[197px] h-[82px] border-x-[22px] border-t-[22px] border-b-[20px] border-[#ed1c24] bg-[#e1e1e1] flex items-center justify-center text-[23px] text-black">
            OK
          </div>
          <div className="w-[161px] h-[51px] bg-[#e1e1e1] border border-[#adadad] flex items-center justify-center text-black">
            キャンセル
          </div>
        </div>
      </div>
    </div>
  </div>
);

export default function App() {
  return (
    <div className="relative w-[2554px] h-[1298px] overflow-hidden bg-white flex flex-col font-['Noto_Sans_CJK_JP','Liberation_Sans',sans-serif]">
      <Ribbon />
      <FormulaBar />
      <Sheet />
      <Dialog />
    </div>
  );
}
